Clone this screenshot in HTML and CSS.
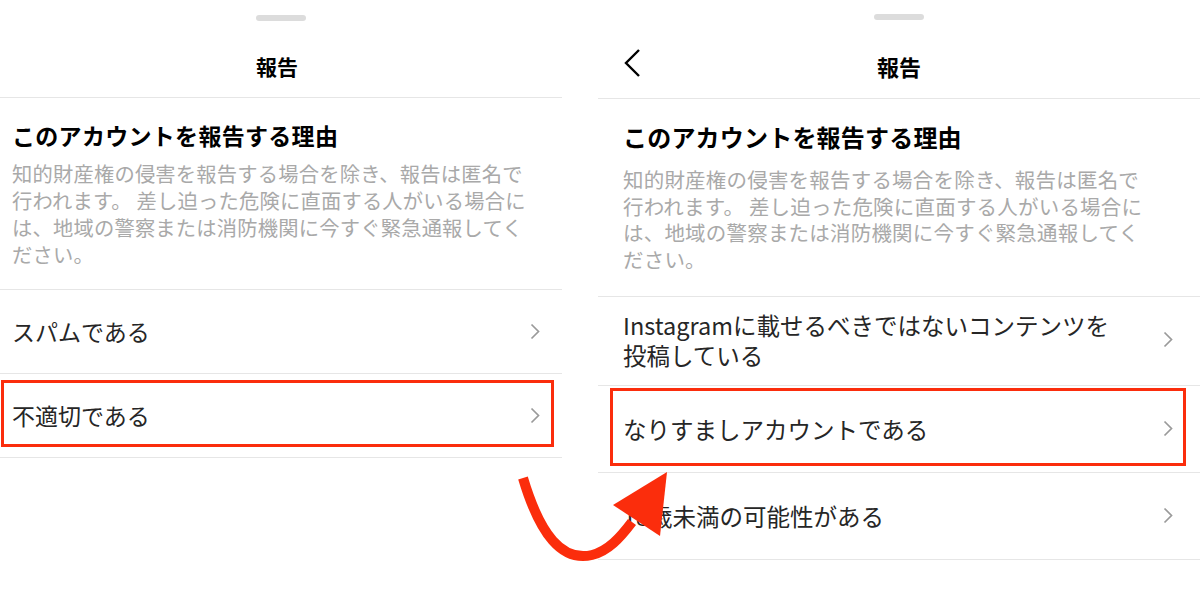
FILE: index.html
```html
<!DOCTYPE html>
<html lang="ja">
<head>
  <meta charset="UTF-8">
  <meta name="viewport" content="width=device-width, initial-scale=1.0">
  <title>報告</title>
  <link rel="stylesheet" href="styles.css">
</head>
<body>
  <div class="page">

    <!-- 1枚目: 理由の選択 -->
    <div class="sheet sheet-left">
      <div class="sheet-head">
        <div class="handle"></div>
        <div class="head-row">
          <span></span>
          <h2 class="title">報告</h2>
          <span></span>
        </div>
      </div>
      <div class="intro">
        <h3>このアカウントを報告する理由</h3>
        <p>知的財産権の侵害を報告する場合を除き、報告は匿名で<br>行われます。 差し迫った危険に直面する人がいる場合に<br>は、地域の警察または消防機関に今すぐ緊急通報してく<br>ださい。</p>
      </div>
      <div class="row">
        <span class="label">スパムである</span>
        <svg class="chev" viewBox="0 0 10 17"><path d="M1.5 1.5 L8.5 8.5 L1.5 15.5"/></svg>
      </div>
      <div class="row">
        <span class="label">不適切である</span>
        <svg class="chev" viewBox="0 0 10 17"><path d="M1.5 1.5 L8.5 8.5 L1.5 15.5"/></svg>
        <div class="mark"></div>
      </div>
    </div>

    <!-- 2枚目: 不適切である -->
    <div class="sheet sheet-right">
      <div class="sheet-head">
        <div class="handle"></div>
        <div class="head-row">
          <svg class="back" viewBox="0 0 18 30"><path d="M16 2 L3 15 L16 28"/></svg>
          <h2 class="title">報告</h2>
          <span></span>
        </div>
      </div>
      <div class="intro">
        <h3>このアカウントを報告する理由</h3>
        <p>知的財産権の侵害を報告する場合を除き、報告は匿名で<br>行われます。 差し迫った危険に直面する人がいる場合に<br>は、地域の警察または消防機関に今すぐ緊急通報してく<br>ださい。</p>
      </div>
      <div class="row row-two">
        <span class="label">Instagramに載せるべきではないコンテンツを<br>投稿している</span>
        <svg class="chev" viewBox="0 0 10 17"><path d="M1.5 1.5 L8.5 8.5 L1.5 15.5"/></svg>
      </div>
      <div class="row">
        <span class="label">なりすましアカウントである</span>
        <svg class="chev" viewBox="0 0 10 17"><path d="M1.5 1.5 L8.5 8.5 L1.5 15.5"/></svg>
        <div class="mark"></div>
      </div>
      <div class="row">
        <span class="label">18歳未満の可能性がある</span>
        <svg class="chev" viewBox="0 0 10 17"><path d="M1.5 1.5 L8.5 8.5 L1.5 15.5"/></svg>
      </div>
    </div>

    <!-- 矢印 -->
    <svg class="arrow" viewBox="0 0 1200 614">
      <path d="M523 478 C540 535 562 562 592 555 C608 551 620 538 632 522" />
      <polygon points="613,505 667,472 660,536" />
    </svg>
  </div>
</body>
</html>
```

FILE: styles.css
```css
body {
  margin: 0;
  background: #fff;
  font-family: "Noto Sans CJK JP", "Noto Sans", sans-serif;
  color: #262626;
}
.page {
  position: relative;
  display: flex;
  gap: 36px;
  width: 1200px;
  height: 614px;
  overflow: hidden;
}
.sheet {
  background: #fff;
}
.sheet-left {
  width: 562px;
}
.sheet-right {
  width: 602px;
}
.sheet-head {
  border-bottom: 1px solid #e6e6e6;
  padding-bottom: 16px;
}
.handle {
  width: 50px;
  height: 6px;
  border-radius: 3px;
  background: #dcdcdc;
  margin: 15px auto 0;
}
.head-row {
  display: grid;
  grid-template-columns: 1fr auto 1fr;
  align-items: center;
  height: 30px;
  margin-top: 30px;
}
.title {
  margin: 0;
  font-size: 21px;
  font-weight: 700;
  line-height: 30px;
  color: #000;
}
.sheet-left .head-row {
  padding-right: 8px;
}
.sheet-right .handle {
  margin-top: 14px;
}
.sheet-right .head-row {
  margin-top: 31px;
}
.sheet-right .sheet-head {
  padding-bottom: 17px;
}
.sheet-right .title {
  font-size: 22px;
}
.back {
  width: 18px;
  height: 30px;
  margin-left: 25px;
  transform: translateY(-3px);
  fill: none;
  stroke: #000;
  stroke-width: 2.4;
}

.intro {
  border-bottom: 1px solid #e6e6e6;
  padding: 21px 12px 21px;
}
.intro h3 {
  margin: 0;
  font-size: 23px;
  font-weight: 700;
  line-height: 32px;
  letter-spacing: 0.3px;
  color: #000;
}
.intro p {
  margin: 9px 0 0;
  font-size: 20.3px;
  line-height: 27px;
  letter-spacing: 0.2px;
  color: #a9a9a9;
}
.sheet-right .intro {
  padding: 22px 25px 23px;
}
.sheet-right .intro h3 {
  font-size: 24px;
  letter-spacing: 0.2px;
}
.sheet-right .intro p {
  margin-top: 13px;
  font-size: 20.5px;
  line-height: 26.7px;
}

.row {
  position: relative;
  display: flex;
  align-items: center;
  justify-content: space-between;
  padding: 26px 22px 26px 12px;
  border-bottom: 1px solid #e6e6e6;
}
.label {
  font-size: 23px;
  line-height: 31px;
}
.chev {
  width: 10px;
  height: 17px;
  fill: none;
  stroke: #9a9a9a;
  stroke-width: 1.7;
}
.sheet-right .row {
  padding: 28px 27px 28px 25px;
}
.sheet-right .label {
  font-size: 23.5px;
  line-height: 30px;
}
.sheet-right .row-two {
  padding-top: 13px;
  padding-bottom: 15px;
}

/* 赤枠 */
.mark {
  position: absolute;
  top: 6px;
  left: 1px;
  right: 8px;
  bottom: 10px;
  border: 3px solid #fb2d0c;
}
.sheet-right .mark {
  top: 2px;
  left: 12px;
  right: 14px;
  bottom: 6px;
}

.arrow {
  position: absolute;
  left: 0;
  top: 0;
  width: 1200px;
  height: 614px;
  pointer-events: none;
}
.arrow path {
  fill: none;
  stroke: #fb2d0c;
  stroke-width: 10;
}
.arrow polygon {
  fill: #fb2d0c;
}
```
